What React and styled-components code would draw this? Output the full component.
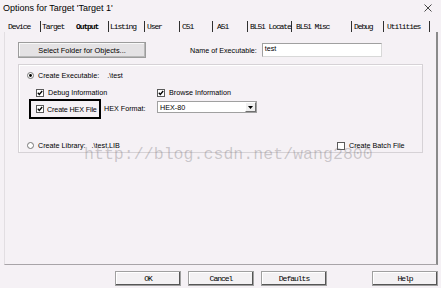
import React from "react";
import styled, { createGlobalStyle } from "styled-components";

const BG = "#f5f1f5";

const Global = createGlobalStyle`
  html, body { margin: 0; padding: 0; background: ${BG}; overflow: hidden; }
  * { box-sizing: border-box; }
`;

const Window = styled.div`
  position: relative;
  width: 441px;
  height: 288px;
  background: ${BG};
  display: flex;
  flex-direction: column;
  font-family: "Liberation Sans", Arial, sans-serif;
  color: #000;
`;

const TitleBar = styled.div`
  height: 16px;
  display: flex;
  align-items: center;
  justify-content: space-between;
  padding: 0 9px 0 3px;
  font-size: 9px;
`;

const TabStrip = styled.div`
  height: 16px;
  display: flex;
  align-items: flex-end;
  padding-left: 4px;
`;

const Tab = styled.div`
  width: ${(p) => p.$w}px;
  height: 11px;
  padding-left: ${(p) => p.$pad ?? 3}px;
  display: flex;
  align-items: center;
  font-family: "Liberation Mono", "Courier New", monospace;
  font-size: 8px;
  letter-spacing: -1.1px;
  font-weight: ${(p) => (p.$active ? 700 : 400)};
  white-space: nowrap;
  border-right: 1px solid ${(p) => (p.$sep ? "#303030" : "transparent")};
`;

const Panel = styled.div`
  flex: 1;
  margin: 0 3px 0 4px;
  border-left: 1px solid #e2dee2;
  border-right: 2px solid #8a8a8a;
  border-bottom: 1px solid #a8a4a8;
  padding: 10px 0 0 13px;
  display: flex;
  flex-direction: column;
`;

const TopRow = styled.div`
  display: flex;
  align-items: center;
  height: 16px;
`;

const PushButton = styled.div`
  width: 128px;
  height: 16px;
  display: flex;
  align-items: center;
  justify-content: center;
  font-size: 7.4px;
  background: #e4e2e4;
  border: 1px solid #9c9c9c;
  box-shadow: inset -1px -1px #b8b8b8, inset 1px 1px #f8f8f8;
`;

const Label = styled.span`
  font-size: 7.2px;
  white-space: nowrap;
  letter-spacing: ${(p) => p.$ls ?? 0}px;
  margin-left: ${(p) => p.$ml ?? 0}px;
  width: ${(p) => (p.$w ? `${p.$w}px` : "auto")};
`;

const TextInput = styled.div`
  width: 120px;
  height: 14px;
  margin-left: 5px;
  background: #fff;
  border: 1px solid #d8d8d8;
  border-top-color: #a0a0a0;
  border-left-color: #a0a0a0;
  font-size: 7.2px;
  padding: 0 0 0 2px;
  display: flex;
  align-items: flex-start;
  line-height: 10px;
`;

const GroupBox = styled.div`
  margin-top: 6px;
  width: 405px;
  height: 89px;
  border: 1px solid #d6d2d6;
  box-shadow: inset 1px 1px #fff;
  display: flex;
  flex-direction: column;
`;

const OptRow = styled.div`
  display: flex;
  align-items: ${(p) => p.$align ?? "center"};
  height: ${(p) => p.$h ?? 9}px;
  margin-top: ${(p) => p.$mt}px;
  padding-left: ${(p) => p.$pl}px;
`;

const Cell = styled.div`
  display: flex;
  align-items: center;
  gap: 4px;
  width: ${(p) => (p.$w ? `${p.$w}px` : "auto")};
`;

const Highlight = styled.div`
  width: 72px;
  height: 20px;
  border: 2px solid #000;
  display: flex;
  align-items: center;
  gap: 3px;
  padding-left: 5px;
  overflow: hidden;
`;

const Select = styled.div`
  margin-top: 2px;
  width: 100px;
  height: 12px;
  background: #fff;
  border: 1px solid #a0a0a0;
  display: flex;
  align-items: center;
  justify-content: space-between;
  font-size: 7.2px;
  padding-left: 2px;
`;

const DropBtn = styled.div`
  width: 11px;
  height: 10px;
  background: #f0f0f0;
  border: 1px solid #fff;
  border-right-color: #707070;
  border-bottom-color: #707070;
  display: flex;
  align-items: center;
  justify-content: center;
`;

const Gap = styled.span`
  display: inline-block;
  width: ${(p) => p.$w}px;
`;

const Watermark = styled.div`
  position: absolute;
  left: 84px;
  top: 146px;
  font-family: "Liberation Mono", "Courier New", monospace;
  font-size: 16.6px;
  line-height: 17px;
  color: rgba(110, 106, 110, 0.33);
  white-space: nowrap;
  pointer-events: none;
`;

const ButtonBar = styled.div`
  height: 23px;
  display: flex;
  align-items: flex-start;
  gap: 7px;
  padding: 6px 3px 0 115px;
`;

const DialogButton = styled.div`
  width: 66px;
  height: 15px;
  margin-left: ${(p) => (p.$push ? "auto" : "0")};
  display: flex;
  align-items: center;
  justify-content: center;
  font-family: "Liberation Mono", "Courier New", monospace;
  font-size: 8px;
  letter-spacing: -1px;
  background: #f3f1f3;
  border: 1px solid #a0a0a0;
  box-shadow: inset -1px -1px #555, inset 1px 1px #fff;
`;

const Check = ({ checked = true }) => (
  <svg width="8" height="8" viewBox="0 0 8 8" style={{ flex: "none" }}>
    <rect x="0.5" y="0.5" width="7" height="7" fill="#fff" stroke="#5a5a5a" />
    {checked && (
      <path d="M1.8 3.8 L3.3 5.5 L6.2 2" fill="none" stroke="#000" strokeWidth="1.3" />
    )}
  </svg>
);

const Radio = ({ on }) => (
  <svg width="7" height="7" viewBox="0 0 7 7" style={{ flex: "none" }}>
    <circle cx="3.5" cy="3.5" r="3" fill="#fff" stroke="#777" />
    {on && <circle cx="3.5" cy="3.5" r="1.4" fill="#000" />}
  </svg>
);

const tabs = [
  { t: "Device", w: 37, sep: true, pad: 4 },
  { t: "Target", w: 33, sep: false, pad: 1 },
  { t: "Output", w: 35, sep: true, pad: 2, active: true },
  { t: "Listing", w: 36, sep: true, pad: 1 },
  { t: "User", w: 35, sep: true, pad: 2 },
  { t: "C51", w: 33, sep: true, pad: 2 },
  { t: "A51", w: 35, sep: true, pad: 4 },
  { t: "BL51 Locate", w: 44, sep: true, pad: 2 },
  { t: "BL51 Misc", w: 60, sep: true, pad: 4 },
  { t: "Debug", w: 32, sep: true, pad: 2 },
  { t: "Utilities", w: 46, sep: true, pad: 3 },
];

export default function App() {
  return (
    <Window>
      <Global />
      <TitleBar>
        <span>Options for Target 'Target 1'</span>
        <svg width="8" height="8" viewBox="0 0 8 8">
          <path d="M0.5 0.5 L7.5 7.5 M7.5 0.5 L0.5 7.5" stroke="#333" strokeWidth="0.9" />
        </svg>
      </TitleBar>
      <TabStrip>
        {tabs.map((x) => (
          <Tab key={x.t} $w={x.w} $sep={x.sep} $pad={x.pad} $active={x.active}>
            {x.t}
          </Tab>
        ))}
      </TabStrip>
      <Panel>
        <TopRow>
          <PushButton>Select Folder for Objects...</PushButton>
          <Label $ml={44}>Name of Executable:</Label>
          <TextInput>test</TextInput>
        </TopRow>
        <GroupBox>
          <OptRow $mt={6} $pl={8}>
            <Cell>
              <Radio on />
              <Label>
                Create Executable:<Gap $w={8} />.\test
              </Label>
            </Cell>
          </OptRow>
          <OptRow $mt={8} $pl={17}>
            <Cell $w={121}>
              <Check />
              <Label>Debug Information</Label>
            </Cell>
            <Cell>
              <Check />
              <Label>Browse Information</Label>
            </Cell>
          </OptRow>
          <OptRow $mt={2} $pl={10} $h={20} $align="flex-start">
            <Highlight>
              <Check />
              <Label $ls={-0.15}>Create HEX File</Label>
            </Highlight>
            <Label $ml={3} $w={53} style={{ lineHeight: "20px" }}>
              HEX Format:
            </Label>
            <Select>
              HEX-80
              <DropBtn>
                <svg width="5" height="3" viewBox="0 0 5 3">
                  <path d="M0 0 L5 0 L2.5 3 Z" fill="#000" />
                </svg>
              </DropBtn>
            </Select>
          </OptRow>
          <OptRow $mt={22} $pl={8}>
            <Cell $w={310}>
              <Radio />
              <Label>
                Create Library:<Gap $w={6} />.\test.LIB
              </Label>
            </Cell>
            <Cell>
              <Check checked={false} />
              <Label>Create Batch File</Label>
            </Cell>
          </OptRow>
        </GroupBox>
      </Panel>
      <ButtonBar>
        <DialogButton>OK</DialogButton>
        <DialogButton>Cancel</DialogButton>
        <DialogButton>Defaults</DialogButton>
        <DialogButton $push>Help</DialogButton>
      </ButtonBar>
      <Watermark>http://blog.csdn.net/wang2800</Watermark>
    </Window>
  );
}
